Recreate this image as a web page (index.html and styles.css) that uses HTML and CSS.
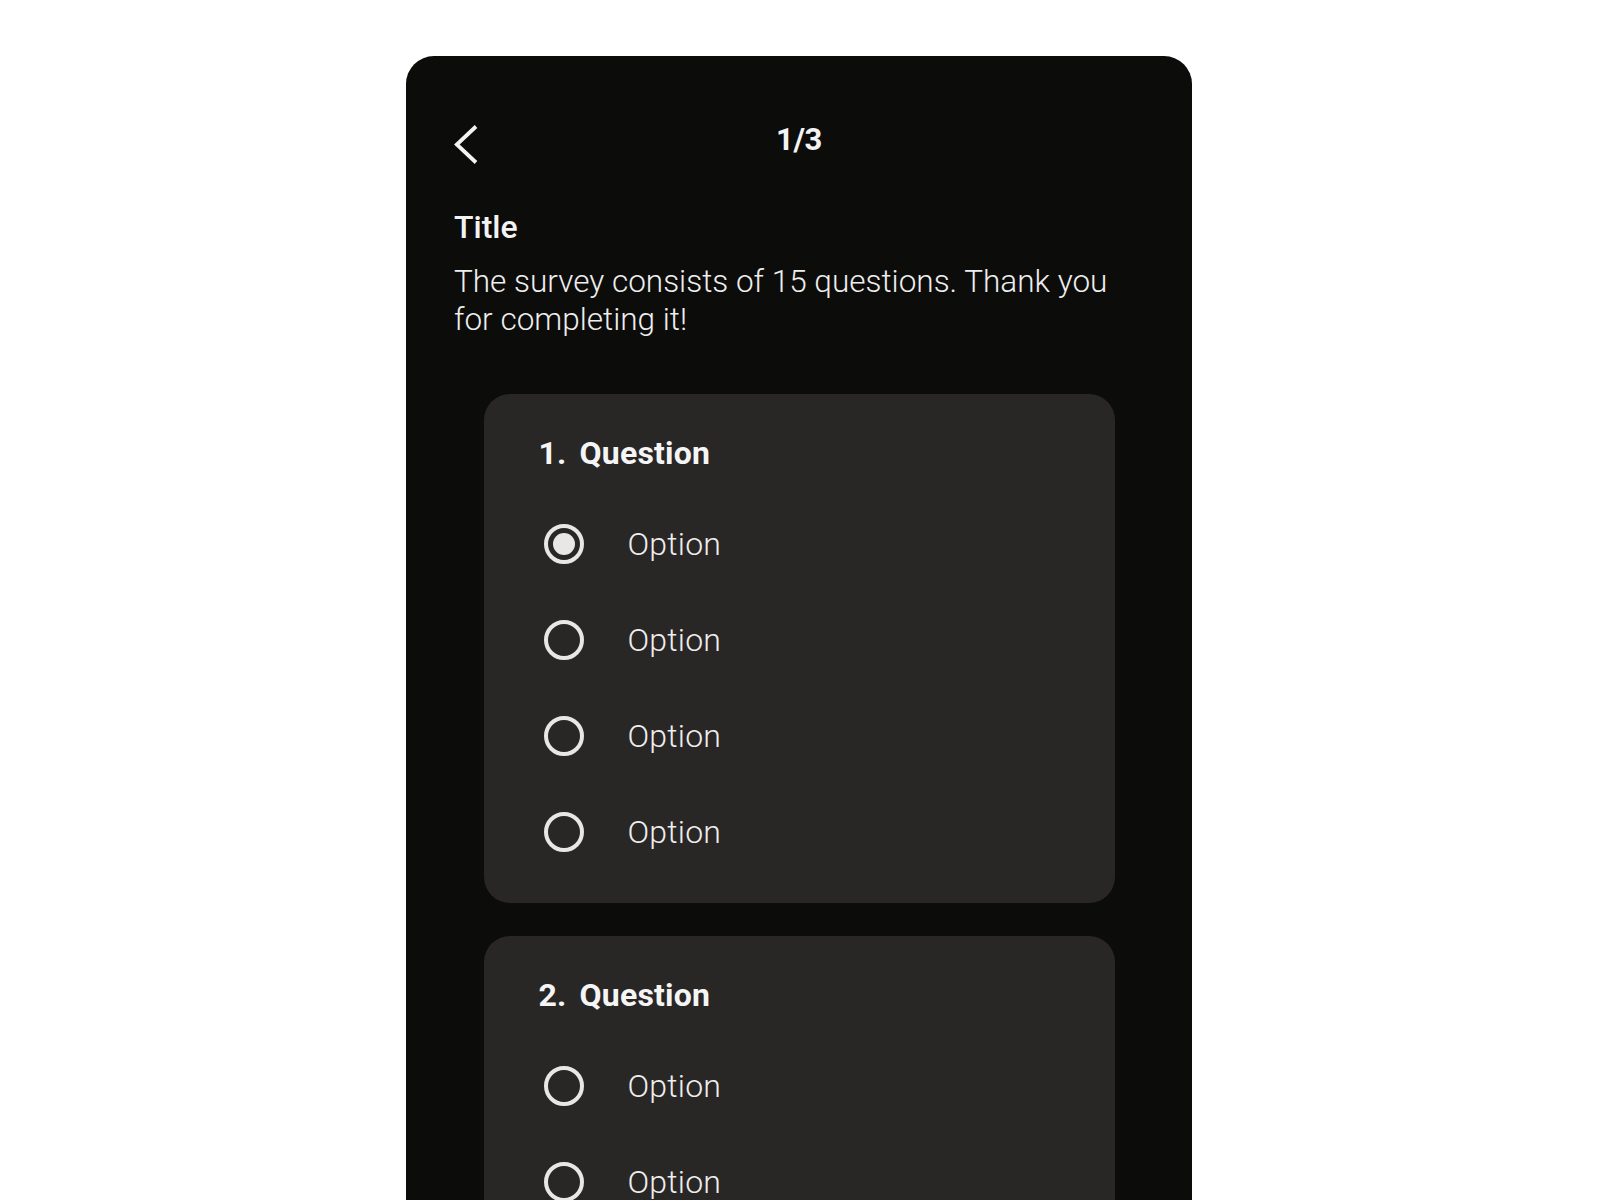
FILE: index.html
```html
<!DOCTYPE html>
<html lang="en">
<head>
<meta charset="utf-8">
<title>Survey</title>
<link rel="stylesheet" href="styles.css">
</head>
<body>
<main class="phone">
  <header class="topbar">
    <button class="back" aria-label="Back">
      <svg viewBox="0 0 28 48" width="28" height="48" aria-hidden="true">
        <path d="M22 9.5 L2.8 27.5 L22 45.5" fill="none" stroke="currentColor" stroke-width="3.8" stroke-linejoin="miter"/>
      </svg>
    </button>
    <div class="step">1/3</div>
    <div class="spacer"></div>
  </header>

  <section class="intro">
    <h1 class="title">Title</h1>
    <p class="desc">The survey consists of 15 questions. Thank you for completing it!</p>
  </section>

  <section class="questions">
    <div class="question">
      <h2 class="q-head"><span class="q-num">1.</span><span>Question</span></h2>
      <ul class="options">
        <li class="option"><span class="radio checked"></span><span class="label">Option</span></li>
        <li class="option"><span class="radio"></span><span class="label">Option</span></li>
        <li class="option"><span class="radio"></span><span class="label">Option</span></li>
        <li class="option"><span class="radio"></span><span class="label">Option</span></li>
      </ul>
    </div>

    <div class="question">
      <h2 class="q-head"><span class="q-num">2.</span><span>Question</span></h2>
      <ul class="options">
        <li class="option"><span class="radio"></span><span class="label">Option</span></li>
        <li class="option"><span class="radio"></span><span class="label">Option</span></li>
        <li class="option"><span class="radio"></span><span class="label">Option</span></li>
        <li class="option"><span class="radio"></span><span class="label">Option</span></li>
      </ul>
    </div>
  </section>
</main>
</body>
</html>
```

FILE: styles.css
```css
html, body {
  margin: 0;
  padding: 0;
  background: #ffffff;
  overflow: hidden;
}

body {
  font-family: Roboto, "Noto Sans", "Liberation Sans", sans-serif;
  color: #f3f3f3;
}

.phone {
  box-sizing: border-box;
  width: 786px;
  height: 1144px;
  margin: 56px 0 0 406px;
  padding: 0 48px;
  background: #0c0c0b;
  border-radius: 28px 28px 0 0;
  overflow: hidden;
}

/* top bar: back arrow, step counter */
.topbar {
  display: grid;
  grid-template-columns: 1fr auto 1fr;
  align-items: center;
  height: 48px;
  padding-top: 60px;
}

.back {
  display: flex;
  align-items: center;
  width: 28px;
  height: 48px;
  padding: 0;
  margin: 0;
  border: 0;
  background: none;
  color: #f3f3f3;
  transform: translateY(1px);
}

.back svg {
  display: block;
}

.step {
  font-size: 31px;
  line-height: 48px;
  font-weight: 700;
  letter-spacing: -0.3px;
}

/* intro text */
.intro {
  margin-top: 43px;
}

.title {
  margin: 0;
  font-size: 32px;
  line-height: 40px;
  font-weight: 500;
}

.desc {
  margin: 16px 0 0;
  font-size: 31.5px;
  line-height: 38px;
  font-weight: 300;
  color: #eeeeee;
}

/* question cards */
.questions {
  display: flex;
  flex-direction: column;
  gap: 33px;
  margin-top: 55px;
}

.question {
  box-sizing: border-box;
  width: 631px;
  margin: 0 auto;
  padding: 39px 56px 23px 55px;
  background: #292626;
  border-radius: 26px;
}

.q-head {
  display: flex;
  gap: 13px;
  margin: 0;
  font-size: 32px;
  line-height: 40px;
  font-weight: 700;
  letter-spacing: 0.2px;
  color: #f5f5f5;
}

.options {
  list-style: none;
  margin: 23px 0 0;
  padding: 0;
}

.option {
  display: flex;
  align-items: center;
  height: 96px;
  padding-left: 5px;
}

.radio {
  box-sizing: border-box;
  flex: none;
  display: flex;
  align-items: center;
  justify-content: center;
  width: 40px;
  height: 40px;
  border: 4px solid #e8e6e6;
  border-radius: 50%;
}

.radio.checked::after {
  content: "";
  width: 22px;
  height: 22px;
  border-radius: 50%;
  background: #e8e6e6;
}

.label {
  margin-left: 44px;
  font-size: 32px;
  line-height: 40px;
  font-weight: 300;
  letter-spacing: 0.2px;
  color: #eeeeee;
}
```
